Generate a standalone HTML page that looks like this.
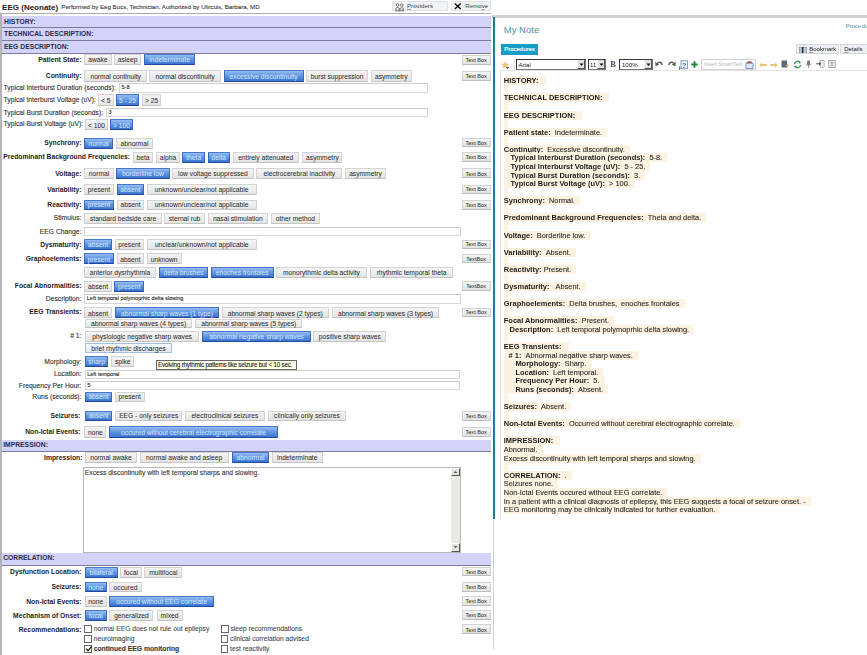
<!DOCTYPE html>
<html><head><meta charset="utf-8"><style>
*{box-sizing:border-box}
html,body{margin:0;padding:0;width:867px;height:655px;overflow:hidden;background:#fff;position:relative;font-family:"Liberation Sans",sans-serif}
div{position:absolute;white-space:nowrap}
#w{left:0;top:0;width:867px;height:655px;background:#fff;filter:blur(0.55px)}
.lr,.cbl,.tatext,.perf,.v,.tip,.in{-webkit-text-stroke:0.1px currentColor}
.b,.tb{-webkit-text-stroke:0.04px currentColor}
.title{left:2.1px;top:1.7px;font:bold 8.0px "Liberation Sans",sans-serif;color:#222;line-height:11px}
.perf{left:61.3px;top:2px;font:6.17px "Liberation Sans",sans-serif;color:#3a3a3a;line-height:9px}
.tbtn{top:1.2px;height:10.2px;background:#f1f2f4;border:1px solid #e0e2e6;font:6.15px "Liberation Sans",sans-serif;line-height:8.4px}
.tbtn svg{position:absolute}
.band{left:2.3px;width:488.7px;background:#d3d3fa;border-bottom:1.3px solid #7c7c9e;font:bold 6.72px "Liberation Sans",sans-serif;color:#2a2a4a;line-height:10px;letter-spacing:0.03px}
.b{font:6.7px "Liberation Sans",sans-serif;color:#2e2e2e;text-align:center;background:linear-gradient(#f5f5f5,#e4e4e4);border:1px solid #d4d4d4;border-bottom-color:#c4c4c4;border-radius:0.5px;padding-top:0.9px}
.b.s{color:#d4e4fa;background:linear-gradient(#96bdf2,#6298e4 45%,#3a74d2);border-color:#4a78c8 #3a68b8 #24489a}
.b.f{border-color:#a8bce0;background:linear-gradient(#f6f8fc,#e4e8f0)}
.tb{left:461.5px;width:29.3px;font:5.6px "Liberation Sans",sans-serif;color:#333;text-align:center;background:linear-gradient(#f6f6f6,#e2e2e2);border:1px solid #d2d2d2;border-bottom-color:#bdbdbd;border-radius:0.5px;padding-top:0.9px}
.lb{font:bold 6.78px "Liberation Sans",sans-serif;color:#1e1e1e;line-height:10px}
.lr{font:6.75px "Liberation Sans",sans-serif;color:#2e2e2e;line-height:10px}
.in{border:1px solid #d6d6d6;border-top-color:#cacaca;background:#fff;font:5.5px "Liberation Sans",sans-serif;color:#222;padding-left:1.5px}
.smt{font-size:5.5px}
.tip{left:156.3px;top:360px;width:140.7px;height:9.5px;background:#ffffe6;border:1px solid #666;font:6.3px "Liberation Sans",sans-serif;letter-spacing:-0.2px;color:#222;line-height:7.7px;padding-left:0.6px}
.ta{left:83.3px;top:466.5px;width:378px;height:86px;border:1px solid #b8b8b8;background:#fff}
.tatext{left:0.5px;top:0.5px;font:6.72px "Liberation Sans",sans-serif;color:#333;line-height:9px}
.sb{right:0;top:0;width:9.2px;height:84px;background:#ebe9e4}
.sbu,.sbd{left:0;width:9.2px;height:8.4px;background:#e4e2dc;border-right:1px solid #555;border-bottom:1px solid #555;border-top:1px solid #fff;border-left:1px solid #fff}
.sbu{top:0} .sbd{bottom:0}
.sbu svg,.sbd svg{position:absolute;left:-1px;top:-1px}
.cb{width:7.8px;height:7.5px;border:1px solid #666;background:#fff}
.cbl{font:6.76px "Liberation Sans",sans-serif;color:#4a4a4a;line-height:10px}
.mynote{left:503.8px;top:23.5px;font:9.5px "Liberation Sans",sans-serif;color:#4d8ea6;line-height:11px}
.proclink{left:845.7px;top:22.3px;font:6.05px "Liberation Sans",sans-serif;color:#4a92a8;line-height:9px}
.procbtn{left:501px;top:43.9px;width:37px;height:10.7px;background:#199cc6;color:#fff;-webkit-text-stroke:0.15px #fff;font:5.95px "Liberation Sans",sans-serif;line-height:10.7px;text-align:center}
.gbtn{top:44.2px;height:10.3px;background:#eef0f3;border:1px solid #d4d8dc;font:6px "Liberation Sans",sans-serif;color:#222;line-height:8.5px}
.sel{top:59.2px;height:10.6px;border:1px solid #3a3a3a;border-right-color:#777;border-bottom-color:#777;background:#fff;font:6.2px "Liberation Sans",sans-serif;color:#222;line-height:8.6px}
.sel span{position:absolute;left:1.5px;top:0.7px}
.arr{right:0;top:0;width:7.5px;height:8.6px;background:#e2e2e2;border-left:1px solid #f8f8f8;border-right:1px solid #555;border-bottom:1px solid #555}
.arr svg{position:absolute;left:-0.5px;top:0}
.boldB{left:610.3px;top:59.8px;font:bold 8.4px "Liberation Serif",serif;color:#3a4a6a;line-height:10px}
.smart{left:701.4px;top:59.4px;width:54.2px;height:10.3px;border:1px solid #d0d0d0;background:#fff;font:5.3px "Liberation Sans",sans-serif;color:#b8b8b8;line-height:8.3px;padding-left:1.5px}
.smart svg{position:absolute}
.note{left:503.8px;top:77.2px;font:7.4px "Liberation Sans",sans-serif;color:#222}
.nl{position:relative;line-height:8.59px;height:8.59px}
.hl{background:#fcf2e2;padding-right:3px}
.v{color:#2c2a26}
u{text-decoration-color:#9a9a9a}
.note b{font-weight:bold;color:#1e1c18;font-size:7.48px}
</style></head>
<body>
<div id="w">
<div class="title">EEG (Neonate)</div>
<div class="perf">Performed by Eeg Bucs, Technician. Authorized by Ulircuis, Barbara, MD</div>
<div class="tbtn" style="left:392px;width:56px"><svg class="ico" style="left:1.5px;top:1px" width="9.5" height="9" viewBox="0 0 9.5 9"><g fill="none" stroke="#5a5a5a" stroke-width="0.75"><circle cx="2.6" cy="1.9" r="1.3"/><circle cx="6.8" cy="2.1" r="1.3"/><path d="M0.8 8.5V5.2Q2.6 3.6 4.4 5.2V8.5M5 8.5V5.4Q6.8 3.8 8.6 5.4V8.5M1.9 8.5v-2M3.3 8.5v-2M6.1 8.5v-2M7.5 8.5v-2"/></g></svg><span style="position:absolute;left:14px;top:0;color:#444"><u>P</u>roviders</span></div>
<div class="tbtn" style="left:451.3px;width:39.4px"><svg class="ico" style="left:1.3px;top:1.2px" width="7.5" height="6.5" viewBox="0 0 7.5 6.5"><path d="M0.8 0.5L6.7 6M6.7 0.5L0.8 6" stroke="#111" stroke-width="1.4"/></svg><span style="position:absolute;left:13px;top:0;color:#444">Remo<u>v</u>e</span></div>
<div style="position:absolute;left:0;top:13px;width:491px;height:1.2px;background:#acacac"></div>
<div style="position:absolute;left:0;top:13.5px;width:1.5px;height:641.5px;background:#b4b4b4"></div>
<div class="band" style="top:16px;height:12px"><span style="position:absolute;left:1.8px;top:0.78px">HISTORY:</span></div>
<div class="band" style="top:28px;height:13px"><span style="position:absolute;left:1.8px;top:0.88px">TECHNICAL DESCRIPTION:</span></div>
<div class="band" style="top:41px;height:13px"><span style="position:absolute;left:1.8px;top:0.68px">EEG DESCRIPTION:</span></div>
<div class="lb" style="top:54.7px;right:785.5px">Patient State:</div>
<div class="b" style="left:84.2px;top:54.3px;width:27.4px;height:10.8px;line-height:8.8px">awake</div>
<div class="b" style="left:114.0px;top:54.3px;width:27.3px;height:10.8px;line-height:8.8px">asleep</div>
<div class="b s" style="left:144.0px;top:54.3px;width:51.2px;height:10.8px;line-height:8.8px">indeterminate</div>
<div class="tb" style="top:55.0px;height:9.5px;line-height:7.5px">Text Box</div>
<div class="lb" style="top:71.0px;right:785.5px">Continuity:</div>
<div class="b" style="left:84.4px;top:70.4px;width:62.6px;height:11.2px;line-height:9.2px">normal continuity</div>
<div class="b" style="left:149.3px;top:70.4px;width:71.7px;height:11.2px;line-height:9.2px">normal discontinuity</div>
<div class="b s" style="left:223.7px;top:70.4px;width:79.9px;height:11.2px;line-height:9.2px">excessive discontinuity</div>
<div class="b" style="left:306.3px;top:70.4px;width:61.7px;height:11.2px;line-height:9.2px">burst suppression</div>
<div class="b" style="left:371.0px;top:70.4px;width:40.6px;height:11.2px;line-height:9.2px">asymmetry</div>
<div class="tb" style="top:71.0px;height:9.6px;line-height:7.6px">Text Box</div>
<div class="lr" style="top:83.3px;left:3.6px">Typical Interburst Duration (seconds):</div>
<div class="in" style="left:119.0px;top:83.3px;width:309.0px;height:9.5px;line-height:7.5px">5-8</div>
<div class="lr" style="top:95.1px;left:3.6px">Typical Interburst Voltage (uV):</div>
<div class="b" style="left:98.0px;top:94.4px;width:15.5px;height:11.4px;line-height:9.4px">&lt; 5</div>
<div class="b s" style="left:116.0px;top:94.4px;width:23.0px;height:11.4px;line-height:9.4px">5 - 25</div>
<div class="b" style="left:142.2px;top:94.4px;width:18.8px;height:11.4px;line-height:9.4px">&gt; 25</div>
<div class="lr" style="top:108.0px;left:3.6px">Typical Burst Duration (seconds):</div>
<div class="in" style="left:106.0px;top:107.8px;width:322.0px;height:9.2px;line-height:7.2px">3</div>
<div class="lr" style="top:119.2px;left:3.6px">Typical Burst Voltage (uV):</div>
<div class="b" style="left:85.0px;top:118.7px;width:23.0px;height:11.1px;line-height:9.1px">&lt; 100</div>
<div class="b s" style="left:110.0px;top:118.7px;width:23.0px;height:11.1px;line-height:9.1px">&gt; 100</div>
<div class="lb" style="top:138.1px;right:785.5px">Synchrony:</div>
<div class="b s" style="left:84.3px;top:137.5px;width:28.7px;height:11.1px;line-height:9.1px">normal</div>
<div class="b" style="left:115.9px;top:137.5px;width:37.1px;height:11.1px;line-height:9.1px">abnormal</div>
<div class="tb" style="top:137.7px;height:9.7px;line-height:7.7px">Text Box</div>
<div class="lb" style="top:152.3px;left:3.3px">Predominant Background Frequencies:</div>
<div class="b" style="left:133.0px;top:151.6px;width:20.0px;height:11.4px;line-height:9.4px">beta</div>
<div class="b" style="left:155.9px;top:151.6px;width:24.1px;height:11.4px;line-height:9.4px">alpha</div>
<div class="b s" style="left:182.4px;top:151.6px;width:22.6px;height:11.4px;line-height:9.4px">theta</div>
<div class="b s" style="left:207.5px;top:151.6px;width:22.5px;height:11.4px;line-height:9.4px">delta</div>
<div class="b" style="left:232.5px;top:151.6px;width:66.3px;height:11.4px;line-height:9.4px">entirely attenuated</div>
<div class="b" style="left:302.4px;top:151.6px;width:40.1px;height:11.4px;line-height:9.4px">asymmetry</div>
<div class="tb" style="top:152.2px;height:9.8px;line-height:7.8px">Text Box</div>
<div class="lb" style="top:168.6px;right:785.5px">Voltage:</div>
<div class="b" style="left:84.3px;top:168.2px;width:29.4px;height:10.8px;line-height:8.8px">normal</div>
<div class="b s" style="left:116.3px;top:168.2px;width:53.3px;height:10.8px;line-height:8.8px">borderline low</div>
<div class="b" style="left:172.0px;top:168.2px;width:81.7px;height:10.8px;line-height:8.8px">low voltage suppressed</div>
<div class="b" style="left:256.3px;top:168.2px;width:86.1px;height:10.8px;line-height:8.8px">electrocerebral inactivity</div>
<div class="b" style="left:345.3px;top:168.2px;width:40.4px;height:10.8px;line-height:8.8px">asymmetry</div>
<div class="tb" style="top:168.0px;height:10.0px;line-height:8.0px">Text Box</div>
<div class="lb" style="top:184.7px;right:785.5px">Variability:</div>
<div class="b" style="left:84.3px;top:184.3px;width:29.4px;height:10.7px;line-height:8.7px">present</div>
<div class="b s" style="left:116.7px;top:184.3px;width:27.3px;height:10.7px;line-height:8.7px">absent</div>
<div class="b" style="left:146.7px;top:184.3px;width:110.0px;height:10.7px;line-height:8.7px">unknown/unclear/not applicable</div>
<div class="tb" style="top:184.5px;height:9.8px;line-height:7.8px">Text Box</div>
<div class="lb" style="top:200.0px;right:785.5px">Reactivity:</div>
<div class="b s" style="left:84.3px;top:199.6px;width:29.4px;height:10.8px;line-height:8.8px">present</div>
<div class="b" style="left:117.0px;top:199.6px;width:27.0px;height:10.8px;line-height:8.8px">absent</div>
<div class="b" style="left:146.7px;top:199.6px;width:110.0px;height:10.8px;line-height:8.8px">unknown/unclear/not applicable</div>
<div class="tb" style="top:200.0px;height:9.7px;line-height:7.7px">Text Box</div>
<div class="lr" style="top:213.1px;right:785.5px">Stimulus:</div>
<div class="b" style="left:84.3px;top:212.5px;width:77.5px;height:11.1px;line-height:9.1px">standard bedside care</div>
<div class="b" style="left:164.4px;top:212.5px;width:40.3px;height:11.1px;line-height:9.1px">sternal rub</div>
<div class="b" style="left:207.6px;top:212.5px;width:60.4px;height:11.1px;line-height:9.1px">nasal stimulation</div>
<div class="b" style="left:271.0px;top:212.5px;width:48.8px;height:11.1px;line-height:9.1px">other method</div>
<div class="lr" style="top:226.8px;right:785.5px">EEG Change:</div>
<div class="in" style="left:84.3px;top:227.2px;width:376.5px;height:9.2px;line-height:7.2px"></div>
<div class="lb" style="top:239.6px;right:785.5px">Dysmaturity:</div>
<div class="b s" style="left:84.3px;top:239.2px;width:27.5px;height:10.8px;line-height:8.8px">absent</div>
<div class="b" style="left:114.7px;top:239.2px;width:29.3px;height:10.8px;line-height:8.8px">present</div>
<div class="b" style="left:146.5px;top:239.2px;width:110.5px;height:10.8px;line-height:8.8px">unclear/unknown/not applicable</div>
<div class="tb" style="top:239.5px;height:9.3px;line-height:7.3px">Text Box</div>
<div class="lb" style="top:253.8px;right:785.5px">Graphoelements:</div>
<div class="b s" style="left:84.3px;top:253.3px;width:29.4px;height:11.0px;line-height:9.0px">present</div>
<div class="b" style="left:116.7px;top:253.3px;width:27.3px;height:11.0px;line-height:9.0px">absent</div>
<div class="b" style="left:146.5px;top:253.3px;width:35.3px;height:11.0px;line-height:9.0px">unknown</div>
<div class="tb" style="top:253.7px;height:9.8px;line-height:7.8px">TextBox</div>
<div class="b" style="left:84.0px;top:266.5px;width:72.0px;height:11.0px;line-height:9.0px">anterior dysrhythmia</div>
<div class="b s" style="left:159.0px;top:266.5px;width:49.0px;height:11.0px;line-height:9.0px">delta brushes</div>
<div class="b s" style="left:210.6px;top:266.5px;width:63.1px;height:11.0px;line-height:9.0px">enoches frontales</div>
<div class="b" style="left:276.0px;top:266.5px;width:91.0px;height:11.0px;line-height:9.0px">monorythmic delta activity</div>
<div class="b" style="left:370.2px;top:266.5px;width:82.8px;height:11.0px;line-height:9.0px">rhythmic temporal theta</div>
<div class="lb" style="top:281.2px;right:785.5px">Focal Abnormalities:</div>
<div class="b" style="left:84.3px;top:280.5px;width:27.5px;height:11.5px;line-height:9.5px">absent</div>
<div class="b s" style="left:114.3px;top:280.5px;width:29.7px;height:11.5px;line-height:9.5px">present</div>
<div class="tb" style="top:281.3px;height:9.7px;line-height:7.7px">TextBox</div>
<div class="lr" style="top:294.0px;right:785.5px">Description:</div>
<div class="in" style="left:84.3px;top:294.3px;width:376.5px;height:9.3px;line-height:7.3px"><span class="smt">Left temporal polymoprhic delta slowing</span></div>
<div class="lb" style="top:307.2px;right:785.5px">EEG Transients:</div>
<div class="b" style="left:84.3px;top:306.7px;width:27.5px;height:11.1px;line-height:9.1px">absent</div>
<div class="b s" style="left:114.7px;top:306.7px;width:104.6px;height:11.1px;line-height:9.1px">abnormal sharp waves (1 type)</div>
<div class="b" style="left:221.8px;top:306.7px;width:106.9px;height:11.1px;line-height:9.1px">abnormal sharp waves (2 types)</div>
<div class="b" style="left:331.8px;top:306.7px;width:107.4px;height:11.1px;line-height:9.1px">abnormal sharp waves (3 types)</div>
<div class="tb" style="top:307.6px;height:9.3px;line-height:7.3px">Text Box</div>
<div class="b" style="left:84.9px;top:318.6px;width:107.3px;height:9.8px;line-height:7.8px">abnormal sharp waves (4 types)</div>
<div class="b" style="left:195.1px;top:318.6px;width:107.3px;height:9.8px;line-height:7.8px">abnormal sharp waves (5 types)</div>
<div class="lr" style="top:331.2px;right:785.5px"># 1:</div>
<div class="b" style="left:85.3px;top:330.6px;width:113.7px;height:11.2px;line-height:9.2px">physiologic negative sharp waves</div>
<div class="b s" style="left:202.0px;top:330.6px;width:109.0px;height:11.2px;line-height:9.2px">abnormal negative sharp waves</div>
<div class="b" style="left:313.4px;top:330.6px;width:72.8px;height:11.2px;line-height:9.2px">positive sharp waves</div>
<div class="b f" style="left:84.9px;top:343.1px;width:86.9px;height:10.2px;line-height:8.2px">brief rhythmic discharges</div>
<div class="lr" style="top:356.5px;right:785.5px">Morphology:</div>
<div class="b s" style="left:84.9px;top:356.3px;width:23.5px;height:10.4px;line-height:8.4px">sharp</div>
<div class="b" style="left:111.4px;top:356.3px;width:22.6px;height:10.4px;line-height:8.4px">spike</div>
<div class="lr" style="top:369.3px;right:785.5px">Location:</div>
<div class="in" style="left:84.7px;top:370.0px;width:375.3px;height:8.6px;line-height:6.6px"><span class="smt">Left temporal</span></div>
<div class="lr" style="top:380.6px;right:785.5px">Frequency Per Hour:</div>
<div class="in" style="left:84.7px;top:381.3px;width:375.3px;height:8.4px;line-height:6.4px"><span class="smt">5</span></div>
<div class="lr" style="top:392.1px;right:785.5px">Runs (seconds):</div>
<div class="b s" style="left:84.7px;top:391.6px;width:27.5px;height:10.9px;line-height:8.9px">absent</div>
<div class="b" style="left:114.7px;top:391.6px;width:30.0px;height:10.9px;line-height:8.9px">present</div>
<div class="tip">Evolving rhythmic patterns like seizure but &lt; 10 sec.</div>
<div class="lb" style="top:410.9px;right:786.5px">Seizures:</div>
<div class="b s" style="left:84.7px;top:410.5px;width:27.5px;height:10.8px;line-height:8.8px">absent</div>
<div class="b" style="left:115.2px;top:410.5px;width:67.0px;height:10.8px;line-height:8.8px">EEG - only seizures</div>
<div class="b" style="left:185.0px;top:410.5px;width:79.7px;height:10.8px;line-height:8.8px">electroclinical seizures</div>
<div class="b" style="left:267.6px;top:410.5px;width:78.8px;height:10.8px;line-height:8.8px">clinically only seizures</div>
<div class="tb" style="top:411.0px;height:9.8px;line-height:7.8px">Text Box</div>
<div class="lb" style="top:427.1px;right:786.5px">Non-Ictal Events:</div>
<div class="b" style="left:84.3px;top:426.4px;width:22.2px;height:11.5px;line-height:9.5px">none</div>
<div class="b s" style="left:109.1px;top:426.4px;width:168.6px;height:11.5px;line-height:9.5px">occured without cerebral electrographic correlate</div>
<div class="tb" style="top:427.0px;height:9.7px;line-height:7.7px">Text Box</div>
<div class="band" style="top:440px;height:11.600000000000023px"><span style="position:absolute;left:0.9px;top:-0.12px">IMPRESSION:</span></div>
<div class="lb" style="top:452.7px;right:784.6px">Impression:</div>
<div class="b" style="left:84.7px;top:452.3px;width:52.6px;height:10.8px;line-height:8.8px">normal awake</div>
<div class="b" style="left:139.6px;top:452.3px;width:89.1px;height:10.8px;line-height:8.8px">normal awake and asleep</div>
<div class="b s" style="left:232.0px;top:452.3px;width:36.9px;height:10.8px;line-height:8.8px">abnormal</div>
<div class="b" style="left:271.6px;top:452.3px;width:51.2px;height:10.8px;line-height:8.8px">indeterminate</div>
<div class="ta"><div class="tatext">Excess discontinuity with left temporal sharps and slowing.</div>
<div class="sb"><div class="sbu"><svg width="9" height="8" viewBox="0 0 9 8"><path d="M2.5 5L4.5 3L6.5 5z" fill="#555"/></svg></div><div class="sbd"><svg width="9" height="8" viewBox="0 0 9 8"><path d="M2.5 3L4.5 5L6.5 3z" fill="#555"/></svg></div></div></div>
<div class="band" style="top:553.2px;height:12.899999999999977px"><span style="position:absolute;left:0.9px;top:-0.02px">CORRELATION:</span></div>
<div class="lb" style="top:567.0px;right:785.5px">Dysfunction Location:</div>
<div class="b s" style="left:84.7px;top:566.5px;width:32.9px;height:11.1px;line-height:9.1px">bilateral</div>
<div class="b" style="left:120.2px;top:566.5px;width:21.6px;height:11.1px;line-height:9.1px">focal</div>
<div class="b" style="left:144.3px;top:566.5px;width:38.1px;height:11.1px;line-height:9.1px">multifocal</div>
<div class="tb" style="top:567.2px;height:9.3px;line-height:7.3px">Text Box</div>
<div class="lb" style="top:582.1px;right:785.5px">Seizures:</div>
<div class="b s" style="left:84.7px;top:581.8px;width:22.2px;height:10.7px;line-height:8.7px">none</div>
<div class="b" style="left:109.4px;top:581.8px;width:32.2px;height:10.7px;line-height:8.7px">occured</div>
<div class="tb" style="top:582.0px;height:9.8px;line-height:7.8px">Text Box</div>
<div class="lb" style="top:596.5px;right:785.5px">Non-Ictal Events:</div>
<div class="b" style="left:84.7px;top:596.3px;width:22.2px;height:10.4px;line-height:8.4px">none</div>
<div class="b s" style="left:109.4px;top:596.3px;width:104.3px;height:10.4px;line-height:8.4px">occured without EEG correlate</div>
<div class="tb" style="top:596.0px;height:9.8px;line-height:7.8px">Text Box</div>
<div class="lb" style="top:610.5px;right:785.5px">Mechanism of Onset:</div>
<div class="b s" style="left:84.7px;top:610.2px;width:22.2px;height:10.6px;line-height:8.6px">focal</div>
<div class="b" style="left:109.4px;top:610.2px;width:44.1px;height:10.6px;line-height:8.6px">generalized</div>
<div class="b" style="left:156.5px;top:610.2px;width:26.0px;height:10.6px;line-height:8.6px">mixed</div>
<div class="tb" style="top:610.0px;height:9.8px;line-height:7.8px">Text Box</div>
<div class="lb" style="top:624.5px;right:785.5px">Recommendations:</div>
<div class="tb" style="top:624.2px;height:10.0px;line-height:8.0px">Text Box</div>
<div class="cb" style="left:84.3px;top:625.3px"></div>
<div class="cbl" style="left:93.7px;top:624.2px;">normal EEG does not rule out epilepsy</div>
<div class="cb" style="left:84.3px;top:635.4px"></div>
<div class="cbl" style="left:93.7px;top:634.3px;">neuroimaging</div>
<div class="cb" style="left:84.3px;top:645.3px"><svg width="8" height="8" viewBox="0 0 8 8" style="position:absolute;left:0;top:-1px"><path d="M1.2 3.6L3 5.8L6.8 1.2" fill="none" stroke="#111" stroke-width="1.2"/></svg></div>
<div class="cbl" style="left:93.7px;top:644.2px;font-weight:bold;color:#333">continued EEG monitoring</div>
<div class="cb" style="left:221px;top:625.3px"></div>
<div class="cbl" style="left:230.4px;top:624.2px;">sleep recommendations</div>
<div class="cb" style="left:220.7px;top:635.3px"></div>
<div class="cbl" style="left:230.1px;top:634.2px;">clinical correlation advised</div>
<div class="cb" style="left:220.7px;top:645.1px"></div>
<div class="cbl" style="left:230.1px;top:644.0px;">test reactivity</div>
<div style="position:absolute;left:492px;top:15px;width:375px;height:2.6px;background:#d0d0d0"></div>
<div style="position:absolute;left:493.1px;top:17.3px;width:2.3px;height:501.7px;background:#1e7d94"></div>
<div style="position:absolute;left:493.3px;top:519px;width:1px;height:130px;background:#d0d0d0"></div>
<div class="mynote">My Note</div>
<div class="proclink">Procedures</div>
<div class="procbtn">Procedures</div>
<div class="gbtn" style="left:796.4px;width:42.2px"><svg style="position:absolute;left:2px;top:1.5px" width="8" height="6.5" viewBox="0 0 8 6.5"><rect x="0.3" y="0.3" width="7.2" height="6" fill="#b8c8d8" stroke="#6a7a8a" stroke-width="0.5"/><path d="M3.6 0v6.5" stroke="#222" stroke-width="1.4"/></svg><span style="position:absolute;left:11.8px;top:0"><u>B</u>ookmark</span></div>
<div class="gbtn" style="left:840.2px;width:40px"><span style="position:absolute;left:3px;top:0"><u>D</u>etails</span></div>
<svg style="position:absolute;left:501.3px;top:60.6px" width="9" height="8" viewBox="0 0 9 8"><path d="M4.2 0.5L5.2 2.9L7.9 3L5.8 4.6L6.5 7.2L4.2 5.8L1.9 7.2L2.6 4.6L0.5 3L3.2 2.9z" fill="#f2c478" stroke="#e0a850" stroke-width="0.3"/><path d="M4.8 6.2h3.8l-1.9 1.8z" fill="#3a3040"/></svg>
<div style="position:absolute;left:513.5px;top:59px;width:1px;height:11px;background:#e0e0e0"></div>
<div class="sel" style="left:516px;width:69.5px"><span>Arial</span><div class="arr"><svg width="7" height="9" viewBox="0 0 7 9"><path d="M1.5 3.5h4l-2 2.5z" fill="#111"/></svg></div></div>
<div class="sel" style="left:587.6px;width:18.4px"><span>11</span><div class="arr"><svg width="7" height="9" viewBox="0 0 7 9"><path d="M1.5 3.5h4l-2 2.5z" fill="#111"/></svg></div></div>
<div class="boldB">B</div>
<div class="sel" style="left:619.4px;width:33.5px"><span>100%</span><div class="arr"><svg width="7" height="9" viewBox="0 0 7 9"><path d="M1.5 3.5h4l-2 2.5z" fill="#111"/></svg></div></div>
<svg style="position:absolute;left:655.2px;top:60.7px" width="8" height="5.5" viewBox="0 0 8 5.5"><path d="M2.2 2.6C3.5 0.6 6.5 0.4 7.3 4" fill="none" stroke="#555" stroke-width="1.4"/><path d="M0.2 0.8L0.6 5.2L4.2 3.8z" fill="#555"/></svg>
<svg style="position:absolute;left:668px;top:60.5px" width="8" height="5.5" viewBox="0 0 8 5.5"><path d="M5.8 2.6C4.5 0.6 1.5 0.4 0.7 4" fill="none" stroke="#555" stroke-width="1.4"/><path d="M7.8 0.8L7.4 5.2L3.8 3.8z" fill="#555"/></svg>
<svg style="position:absolute;left:678.8px;top:59.8px" width="9" height="10" viewBox="0 0 9 10"><rect x="2" y="0.8" width="6.3" height="8" fill="#fff" stroke="#5a7ea8" stroke-width="0.8"/><text x="3" y="7.5" font-size="7" font-family="Liberation Sans" font-weight="bold" fill="#2a5a90">?</text><path d="M0.5 6.5v3M0 8.5l0.5 1l0.5-1" stroke="#2a5a90" stroke-width="0.8" fill="none"/></svg>
<svg style="position:absolute;left:691.3px;top:61px" width="7" height="7" viewBox="0 0 7 7"><path d="M3.5 0.3v6.4M0.3 3.5h6.4" stroke="#1b8a3a" stroke-width="2"/></svg>
<div class="smart">Insert SmartText<svg style="position:absolute;right:1px;top:1px" width="9" height="8" viewBox="0 0 9 8"><rect x="1" y="2" width="7" height="5.5" fill="#dfe8f5" stroke="#4a78b0" stroke-width="0.7"/><path d="M2 1.5h5" stroke="#c84a3a" stroke-width="1.5"/><path d="M2.5 1.5l1-1h2l1 1" stroke="#3a9a4a" stroke-width="0.8" fill="none"/></svg></div>
<svg style="position:absolute;left:758.8px;top:62px" width="8" height="6" viewBox="0 0 8 6"><path d="M0.3 3L3 0.5V2h4.7v2H3v1.5z" fill="#ebc274"/></svg>
<svg style="position:absolute;left:769.8px;top:62px" width="8" height="6" viewBox="0 0 8 6"><path d="M7.7 3L5 0.5V2H0.3v2H5v1.5z" fill="#ebc274"/></svg>
<svg style="position:absolute;left:781px;top:60px" width="9" height="9" viewBox="0 0 9 9"><rect x="0.5" y="0.5" width="5.5" height="7" fill="#5c6a7c"/><path d="M4.5 5.5h2.5l-1-1.2M7 5.5l-1 1.5" stroke="#e8a840" stroke-width="1.1" fill="none"/></svg>
<svg style="position:absolute;left:792.6px;top:60px" width="9" height="9" viewBox="0 0 9 9"><path d="M1.5 4A3 3 0 0 1 7 2.5M7.5 5A3 3 0 0 1 2 6.5" fill="none" stroke="#2a9a4a" stroke-width="1.3"/><path d="M6 0.8L8.2 3.2L5.5 3.3z M3 8.2L0.8 5.8L3.5 5.7z" fill="#2a9a4a"/></svg>
<svg style="position:absolute;left:805.4px;top:60.3px" width="7" height="8" viewBox="0 0 7 8"><rect x="2" y="0.3" width="3" height="5" rx="1.5" fill="#7a7a7a"/><path d="M0.8 3.5C0.8 6 6.2 6 6.2 3.5M3.5 5.5v2.5" stroke="#8a8a8a" stroke-width="0.8" fill="none"/></svg>
<svg style="position:absolute;left:816.2px;top:60.3px" width="8.5" height="7.5" viewBox="0 0 8.5 7.5"><rect x="4.3" y="0.4" width="3.8" height="6.8" fill="#f4f4f4" stroke="#999" stroke-width="0.7"/><path d="M0.2 3.8h4.2" stroke="#555" stroke-width="1.1"/><path d="M3 1.8L5.2 3.8L3 5.8z" fill="#555"/></svg>
<svg style="position:absolute;left:828.2px;top:60.2px" width="8" height="8" viewBox="0 0 8 9"><rect x="0.5" y="0.5" width="7" height="8" fill="#f4f4f4" stroke="#777" stroke-width="0.7"/><circle cx="4" cy="3.5" r="1.2" fill="none" stroke="#666" stroke-width="0.6"/><path d="M2 7c0.5-1.5 3.5-1.5 4 0" stroke="#666" stroke-width="0.6" fill="none"/></svg>
<div style="position:absolute;left:500px;top:70px;width:367px;height:1px;background:#e4e4e4"></div>
<div style="position:absolute;left:500px;top:70px;width:1px;height:449px;background:#dedede"></div>
<div class="note"><div class="nl"><span class="hl" style="padding-right:5px"><b>HISTORY:</b><span class="v">&nbsp;</span></span></div>
<div class="nl"><span class="hl" style="padding-right:1.8px">&nbsp;</span></div>
<div class="nl"><span class="hl" style="padding-right:5px"><b>TECHNICAL DESCRIPTION:</b><span class="v">&nbsp;</span></span></div>
<div class="nl"><span class="hl" style="padding-right:1.8px">&nbsp;</span></div>
<div class="nl"><span class="hl" style="padding-right:5px"><b>EEG DESCRIPTION:</b><span class="v">&nbsp;</span></span></div>
<div class="nl"><span class="hl" style="padding-right:1.8px">&nbsp;</span></div>
<div class="nl"><span class="hl"><b>Patient state:</b><span class="v">&nbsp;&nbsp;Indeterminate.&nbsp;</span></span></div>
<div class="nl"><span class="hl" style="padding-right:1.8px">&nbsp;</span></div>
<div class="nl"><span class="hl"><b>Continuity:</b><span class="v">&nbsp;&nbsp;Excessive discontinuity.&nbsp;</span></span></div>
<div class="nl"><span class="hl"><i style="display:inline-block;width:6.8px"></i><b>Typical Interburst Duration (seconds):</b><span class="v">&nbsp;&nbsp;5-8.&nbsp;</span></span></div>
<div class="nl"><span class="hl"><i style="display:inline-block;width:6.8px"></i><b>Typical Interburst Voltage (uV):</b><span class="v">&nbsp;&nbsp;5 - 25.&nbsp;</span></span></div>
<div class="nl"><span class="hl"><i style="display:inline-block;width:6.8px"></i><b>Typical Burst Duration (seconds):</b><span class="v">&nbsp;&nbsp;3.&nbsp;</span></span></div>
<div class="nl"><span class="hl"><i style="display:inline-block;width:6.8px"></i><b>Typical Burst Voltage (uV):</b><span class="v">&nbsp;&nbsp;&gt; 100.&nbsp;</span></span></div>
<div class="nl"><span class="hl" style="padding-right:1.8px">&nbsp;</span></div>
<div class="nl"><span class="hl"><b>Synchrony:</b><span class="v">&nbsp;&nbsp;Normal.&nbsp;</span></span></div>
<div class="nl"><span class="hl" style="padding-right:1.8px">&nbsp;</span></div>
<div class="nl"><span class="hl"><b>Predominant Background Frequencies:</b><span class="v">&nbsp;&nbsp;Theta and delta.&nbsp;</span></span></div>
<div class="nl"><span class="hl" style="padding-right:1.8px">&nbsp;</span></div>
<div class="nl"><span class="hl"><b>Voltage:</b><span class="v">&nbsp;&nbsp;Borderline low.&nbsp;</span></span></div>
<div class="nl"><span class="hl" style="padding-right:1.8px">&nbsp;</span></div>
<div class="nl"><span class="hl"><b>Variability:</b><span class="v">&nbsp;&nbsp;Absent.&nbsp;</span></span></div>
<div class="nl"><span class="hl" style="padding-right:1.8px">&nbsp;</span></div>
<div class="nl"><span class="hl"><b>Reactivity:</b><span class="v">&nbsp;Present.&nbsp;</span></span></div>
<div class="nl"><span class="hl" style="padding-right:1.8px">&nbsp;</span></div>
<div class="nl"><span class="hl"><b>Dysmaturity:</b><span class="v">&nbsp;&nbsp;&nbsp;Absent.&nbsp;</span></span></div>
<div class="nl"><span class="hl" style="padding-right:1.8px">&nbsp;</span></div>
<div class="nl"><span class="hl"><b>Graphoelements:</b><span class="v">&nbsp;&nbsp;Delta brushes,&nbsp; enoches frontales&nbsp;</span></span></div>
<div class="nl"><span class="hl" style="padding-right:1.8px">&nbsp;</span></div>
<div class="nl"><span class="hl"><b>Focal Abnormalities:</b><span class="v">&nbsp;&nbsp;Present.&nbsp;</span></span></div>
<div class="nl"><span class="hl"><i style="display:inline-block;width:5.8px"></i><b>Description:</b><span class="v">&nbsp;&nbsp;Left temporal polymoprhic delta slowing.&nbsp;</span></span></div>
<div class="nl"><span class="hl" style="padding-right:1.8px">&nbsp;</span></div>
<div class="nl"><span class="hl" style="padding-right:5px"><b>EEG Transients:</b><span class="v">&nbsp;</span></span></div>
<div class="nl"><span class="hl"><i style="display:inline-block;width:4.8px"></i><b># 1:</b><span class="v">&nbsp;&nbsp;Abnormal negative sharp waves.&nbsp;</span></span></div>
<div class="nl"><span class="hl"><i style="display:inline-block;width:11.6px"></i><b>Morphology:</b><span class="v">&nbsp;&nbsp;Sharp.&nbsp;</span></span></div>
<div class="nl"><span class="hl"><i style="display:inline-block;width:11.6px"></i><b>Location:</b><span class="v">&nbsp;&nbsp;Left temporal.&nbsp;</span></span></div>
<div class="nl"><span class="hl"><i style="display:inline-block;width:11.6px"></i><b>Frequency Per Hour:</b><span class="v">&nbsp;&nbsp;5.&nbsp;</span></span></div>
<div class="nl"><span class="hl"><i style="display:inline-block;width:11.6px"></i><b>Runs (seconds):</b><span class="v">&nbsp;&nbsp;Absent.&nbsp;</span></span></div>
<div class="nl"><span class="hl" style="padding-right:1.8px">&nbsp;</span></div>
<div class="nl"><span class="hl"><b>Seizures:</b><span class="v">&nbsp;&nbsp;Absent.&nbsp;</span></span></div>
<div class="nl"><span class="hl" style="padding-right:1.8px">&nbsp;</span></div>
<div class="nl"><span class="hl"><b>Non-Ictal Events:</b><span class="v">&nbsp;&nbsp;Occurred without cerebral electrographic correlate.&nbsp;</span></span></div>
<div class="nl"><span class="hl" style="padding-right:1.8px">&nbsp;</span></div>
<div class="nl"><span class="hl" style="padding-right:5px"><b>IMPRESSION:</b><span class="v">&nbsp;</span></span></div>
<div class="nl"><span class="hl"><span class="v">Abnormal.&nbsp;</span></span></div>
<div class="nl"><span class="hl"><span class="v">Excess discontinuity with left temporal sharps and slowing.&nbsp;</span></span></div>
<div class="nl"><span class="hl" style="padding-right:1.8px">&nbsp;</span></div>
<div class="nl"><span class="hl"><b>CORRELATION:</b><span class="v">&nbsp;&nbsp;.&nbsp;</span></span></div>
<div class="nl"><span class="hl"><span class="v">Seizures none.&nbsp;</span></span></div>
<div class="nl"><span class="hl"><span class="v">Non-Ictal Events occured without EEG correlate.&nbsp;</span></span></div>
<div class="nl"><span class="hl"><span class="v">In a patient with a clinical diagnosis of epilepsy, this EEG suggests a focal of seizure onset. -&nbsp;</span></span></div>
<div class="nl"><span class="hl"><span class="v">EEG monitoring may be clinically indicated for further evaluation.&nbsp;</span></span></div></div>
</div>
</body></html>
